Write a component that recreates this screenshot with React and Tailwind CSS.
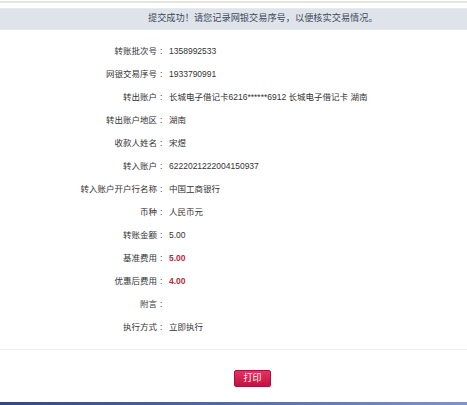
import React from "react";

const rows = [
  ["转账批次号", "1358992533"],
  ["网银交易序号", "1933790991"],
  ["转出账户", "长城电子借记卡6216******6912 长城电子借记卡 湖南"],
  ["转出账户地区", "湖南"],
  ["收款人姓名", "宋煜"],
  ["转入账户", "6222021222004150937"],
  ["转入账户开户行名称", "中国工商银行"],
  ["币种", "人民币元"],
  ["转账金额", "5.00"],
  ["基准费用", "5.00", true],
  ["优惠后费用", "4.00", true],
  ["附言", ""],
  ["执行方式", "立即执行"],
];

export default function App() {
  return (
    <div
      className="w-[467px] h-[405px] bg-white flex flex-col overflow-hidden text-[#333]"
      style={{ fontFamily: '"Liberation Sans", "Noto Sans CJK SC", sans-serif' }}
    >
      <div className="mt-px h-[2px] bg-[#e2e6de]" />
      <div className="mt-[5px] h-[22px] bg-[#dfe4eb] border-y border-[#e6eaef] flex items-center pl-[148px] text-[9.2px] text-[#3e4a5a]">
        提交成功！请您记录网银交易序号，以便核实交易情况。
      </div>
      <div className="mt-[10px] flex flex-col text-[8.5px]">
        {rows.map(([label, value, red]) => (
          <div key={label} className="h-[23px] flex items-center">
            <span className="w-[157px] text-right">{label}</span>
            <span className="w-[12px] pl-[3px]">:</span>
            <span className={red ? "text-[#b8283a] font-bold" : ""}>{value}</span>
          </div>
        ))}
      </div>
      <div className="mt-[10px] h-px bg-[#eeeeee]" />
      <div className="mt-[20px] flex pl-[234px]">
        <div className="w-[37px] h-[17px] rounded-[2px] border border-[#a8123e] bg-gradient-to-b from-[#e8305f] to-[#c40f42] text-white text-[9px] flex items-center justify-center">
          打印
        </div>
      </div>
      <div className="mt-auto h-[3px] bg-gradient-to-r from-[#2e4a7a] via-[#4f6f9f] to-[#7b97c4]" />
    </div>
  );
}
